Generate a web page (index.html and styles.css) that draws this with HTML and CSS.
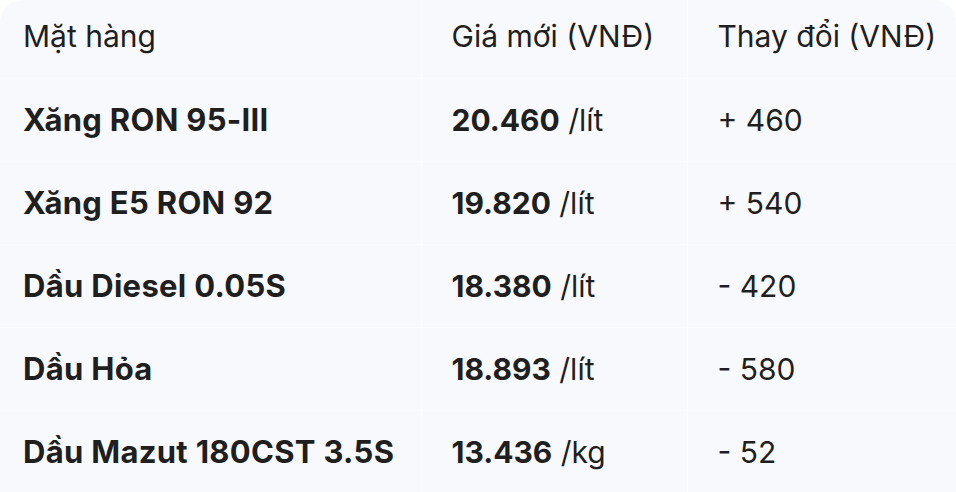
FILE: index.html
```html
<!DOCTYPE html>
<html lang="vi">
<head>
<meta charset="utf-8">
<link rel="stylesheet" href="styles.css">
</head>
<body>
<div class="card">
  <table class="prices">
    <colgroup>
      <col class="c1"><col class="c2"><col class="c3">
    </colgroup>
    <thead>
      <tr><th class="first">Mặt hàng</th><th>Giá mới (VNĐ)</th><th>Thay đổi (VNĐ)</th></tr>
    </thead>
    <tbody>
      <tr><td class="first name">Xăng RON 95-III</td><td><b>20.460</b> /lít</td><td>+ 460</td></tr>
      <tr><td class="first name">Xăng E5 RON 92</td><td><b>19.820</b> /lít</td><td>+ 540</td></tr>
      <tr><td class="first name">Dầu Diesel 0.05S</td><td><b>18.380</b> /lít</td><td>- 420</td></tr>
      <tr><td class="first name">Dầu Hỏa</td><td><b>18.893</b> /lít</td><td>- 580</td></tr>
      <tr><td class="first name">Dầu Mazut 180CST 3.5S</td><td><b>13.436</b> /kg</td><td>- 52</td></tr>
    </tbody>
  </table>
</div>
</body>
</html>
```
FILE: styles.css
```css
html, body {
  margin: 0;
  padding: 0;
  background: #ffffff;
}
body {
  font-family: "Inter", "Roboto", sans-serif;
  color: #1f1f1f;
}
.card {
  width: 956px;
  height: 492px;
  overflow: hidden;
  background: #f8f9fc;
  border-radius: 22px 22px 0 0;
}
.prices {
  width: 956px;
  border-collapse: collapse;
  table-layout: fixed;
}
.c1 { width: 421px; }
.c2 { width: 266px; }
.c3 { width: 269px; }
.prices th, .prices td {
  text-align: left;
  padding: 0 0 0 30px;
  font-size: 30px;
  white-space: nowrap;
  border: 1px solid #fcfcff;
}
.prices tr > :first-child { border-left: none; }
.prices tr > :last-child { border-right: none; }
.prices thead th {
  border-top: none;
  font-weight: 400;
  height: 78px;
  vertical-align: middle;
  padding-bottom: 5px;
  box-sizing: border-box;
}
.prices tbody td {
  height: 83px;
  box-sizing: border-box;
}
.prices .first { padding-left: 23px; }
.prices .name, .prices b { font-weight: 700; }
.prices .name {
  font-size: 31px;
  letter-spacing: 0.3px;
}
```
